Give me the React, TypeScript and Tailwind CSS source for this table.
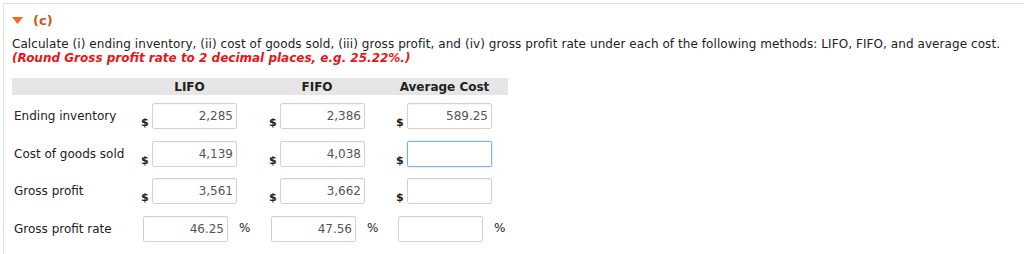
import React from 'react';

type Cell = { value: string; focus?: boolean };

const rows: { label: string; cells: Cell[]; pct?: boolean }[] = [
  { label: 'Ending inventory', cells: [{ value: '2,285' }, { value: '2,386' }, { value: '589.25' }] },
  { label: 'Cost of goods sold', cells: [{ value: '4,139' }, { value: '4,038' }, { value: '', focus: true }] },
  { label: 'Gross profit', cells: [{ value: '3,561' }, { value: '3,662' }, { value: '' }] },
  { label: 'Gross profit rate', cells: [{ value: '46.25' }, { value: '47.56' }, { value: '' }], pct: true },
];

// left offsets of the $ sign / percent input inside each column
const dollarPad = ['pl-[15px]', 'pl-[16px]', 'pl-[15px]'];
const pctPad = ['pl-[17px]', 'pl-[18px]', 'pl-[17px]'];

function Field({ cell, w }: { cell: Cell; w: string }) {
  return (
    <div
      className={`h-[26px] ${w} rounded-[2px] bg-white flex items-center justify-end pr-[3px] text-[12px] text-[#555] ${
        cell.focus
          ? 'border border-[#7fb3e6] shadow-[0_0_2px_rgba(90,150,220,0.5)]'
          : 'border border-[#d2d2d2] shadow-[inset_0_1px_1px_rgba(0,0,0,0.04)]'
      }`}
    >
      {cell.value}
    </div>
  );
}

export default function App() {
  return (
    <div className="w-[1024px] h-[254px] bg-white pt-[3px] pl-[3px] overflow-hidden font-['DejaVu_Sans',Verdana,sans-serif] text-[#222]">
      <div className="h-full border-t border-l border-[#dde1e7] pl-[8px] pt-[9px]">
        {/* part heading */}
        <div className="flex items-center gap-[10px] h-[14px]">
          <svg width="11" height="7" viewBox="0 0 11 7" className="mt-[1px]">
            <polygon points="0,0 11,0 5.5,7" fill="#f26b21" />
          </svg>
          <span className="text-[13px] font-bold text-[#c8561a] leading-none">(c)</span>
        </div>

        <p className="mt-[10px] text-[12px] leading-[14px] tracking-[0.07px] whitespace-nowrap">
          Calculate (i) ending inventory, (ii) cost of goods sold, (iii) gross profit, and (iv) gross profit rate under each of the following methods: LIFO, FIFO, and average cost.
        </p>
        <p className="text-[12px] leading-[14px] font-bold italic text-[#e8151b] whitespace-nowrap">
          (Round Gross profit rate to 2 decimal places, e.g. 25.22%.)
        </p>

        {/* table */}
        <div className="mt-[13px] w-[496px]">
          <div className="grid grid-cols-[114px_127px_128px_127px] h-[17px] bg-[#e6e6e6] text-[12px] font-bold items-center">
            <div />
            <div className="text-center">LIFO</div>
            <div className="text-center">FIFO</div>
            <div className="text-center">Average Cost</div>
          </div>

          <div className="flex flex-col gap-[11.5px] mt-[8px]">
            {rows.map((row) => (
              <div key={row.label} className="grid grid-cols-[114px_127px_128px_127px] items-center h-[26px] text-[12px]">
                <div className="pl-[2px] whitespace-nowrap">{row.label}</div>
                {row.cells.map((cell, i) =>
                  row.pct ? (
                    <div key={i} className={`flex items-start ${pctPad[i]}`}>
                      <Field cell={cell} w="w-[85px]" />
                      <span className="ml-[11px] mt-[3px] text-[12px]">%</span>
                    </div>
                  ) : (
                    <div key={i} className={`flex items-end ${dollarPad[i]}`}>
                      <span className="text-[11px] font-bold leading-none mb-[1px] w-[11px]">$</span>
                      <Field cell={cell} w="w-[85px]" />
                    </div>
                  )
                )}
              </div>
            ))}
          </div>
        </div>
      </div>
    </div>
  );
}
